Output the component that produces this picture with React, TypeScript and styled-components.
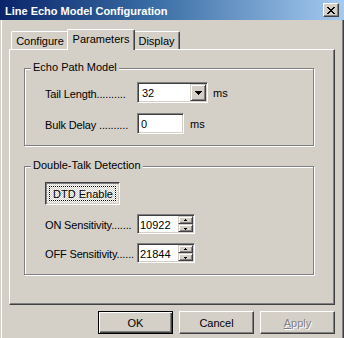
import React from 'react';
import styled, { createGlobalStyle } from 'styled-components';

const Global = createGlobalStyle`
  html, body {
    margin: 0;
    padding: 0;
    background: #d4d0c8;
  }
  * {
    box-sizing: border-box;
  }
`

const FACE = '#d4d0c8';
const SHADOW = '#808080';
const DARK = '#404040';

const Window = styled.div`
  width: 344px;
  height: 338px;
  background: ${FACE};
  font-family: "Liberation Sans", Arial, sans-serif;
  font-size: 11px;
  color: #000;
  display: flex;
  flex-direction: column;
  overflow: hidden;
`

const TitleBar = styled.div`
  height: 20px;
  flex: none;
  display: flex;
  align-items: center;
  justify-content: space-between;
  padding: 0 5px 0 5px;
  background: linear-gradient(to right, #0a246a, #3a6ea5 45%, #a6caf0);
`

const TitleText = styled.span`
  color: #fff;
  font-weight: bold;
  font-size: 11px;
  padding-top: 1px;
`

const CloseButton = styled.div`
  width: 16px;
  height: 14px;
  background: ${FACE};
  border: 1px solid;
  border-color: #fff ${DARK} ${DARK} #fff;
  box-shadow: inset -1px -1px ${SHADOW};
  display: flex;
  align-items: center;
  justify-content: center;
  padding-right: 1px;
`

const Body = styled.div`
  flex: 1;
  padding: 9px 9px 0 9px;
  box-shadow: inset 1px 0 ${FACE}, inset 2px 0 #fff, inset -1px 0 ${DARK}, inset -2px 0 ${SHADOW};
  display: flex;
  flex-direction: column;
`

const TabRow = styled.div`
  display: flex;
  align-items: flex-end;
  height: 20px;
  padding-left: 2px;
`

const Tab = styled.div<{ $active?: boolean; $w: number }>`
  position: relative;
  z-index: ${p => (p.$active ? 1 : 0)};
  width: ${p => p.$w + (p.$active ? 4 : 0)}px;
  height: ${p => (p.$active ? 21 : 18)}px;
  margin: 0 ${p => (p.$active ? -2 : 0)}px ${p => (p.$active ? -1 : 0)}px;
  background: ${FACE};
  border-top: 1px solid #fff;
  border-left: 1px solid #fff;
  border-right: 1px solid ${DARK};
  box-shadow: inset -1px 0 ${SHADOW};
  border-radius: 2px 2px 0 0;
  display: flex;
  align-items: center;
  justify-content: center;
  padding-bottom: ${p => (p.$active ? 3 : 0)}px;
`

const Panel = styled.div`
  width: 326px;
  height: 256px;
  border: 1px solid;
  border-color: #fff ${DARK} ${DARK} #fff;
  box-shadow: inset -1px -1px ${SHADOW};
  padding: 18px 0 0 14px;
  display: flex;
  flex-direction: column;
`

const Group = styled.div<{ $gap?: number }>`
  position: relative;
  width: 290px;
  margin-top: ${p => p.$gap ?? 0}px;
  border: 1px solid ${SHADOW};
  box-shadow: inset 1px 1px #fff, 1px 1px #fff;
  padding: 13px 0 11px 20px;
  display: flex;
  flex-direction: column;
`

const Caption = styled.span`
  position: absolute;
  top: -8px;
  left: 6px;
  padding: 0 2px;
  line-height: 13px;
  background: ${FACE};
`

const Row = styled.div<{ $mt?: number }>`
  display: flex;
  align-items: center;
  margin-top: ${p => p.$mt ?? 0}px;
`

const Label = styled.span`
  width: 92px;
  white-space: nowrap;
  letter-spacing: -0.15px;
  padding-top: 2px;
`

const Unit = styled.span<{ $ml: number }>`
  margin-left: ${p => p.$ml}px;
  padding-top: 1px;
`

const Sunken = styled.div<{ $w: number; $h: number }>`
  width: ${p => p.$w}px;
  height: ${p => p.$h}px;
  background: #fff;
  border: 1px solid;
  border-color: ${SHADOW} #fff #fff ${SHADOW};
  box-shadow: inset 1px 1px ${DARK}, inset -1px -1px ${FACE};
  padding: 1px;
  display: flex;
`

const FieldText = styled.span<{ $pl: number }>`
  flex: 1;
  display: flex;
  align-items: center;
  padding-left: ${p => p.$pl}px;
  padding-top: 1px;
`

const ArrowButton = styled.div<{ $h: number }>`
  width: ${p => (p.$h > 10 ? 16 : 15)}px;
  height: ${p => p.$h}px;
  background: ${FACE};
  border: 1px solid;
  border-color: ${FACE} ${DARK} ${DARK} ${FACE};
  box-shadow: inset 1px 1px #fff, inset -1px -1px ${SHADOW};
  display: flex;
  align-items: center;
  justify-content: center;
`

const SpinStack = styled.div`
  display: flex;
  flex-direction: column;
`

const PushButton = styled.div<{ $w?: number; $default?: boolean; $pressed?: boolean; $disabled?: boolean }>`
  width: ${p => p.$w ?? 75}px;
  height: 23px;
  display: flex;
  align-items: center;
  justify-content: center;
  padding: 3px;
  color: ${p => (p.$disabled ? SHADOW : '#000')};
  text-shadow: ${p => (p.$disabled ? '1px 1px #fff' : 'none')};
  border: 1px solid;
  ${p =>
    p.$pressed
      ? `
    border-color: ${DARK} #fff #fff ${DARK};
    box-shadow: inset 1px 1px ${SHADOW}, inset -1px -1px ${FACE};
    background: repeating-conic-gradient(#fff 0 25%, ${FACE} 0 50%) 0 0 / 2px 2px;
  `
      : p.$default
      ? `
    border-color: #000;
    box-shadow: inset 1px 1px #fff, inset -1px -1px ${DARK}, inset -2px -2px ${SHADOW};
    background: ${FACE};
  `
      : `
    border-color: #fff ${DARK} ${DARK} #fff;
    box-shadow: inset -1px -1px ${SHADOW};
    background: ${FACE};
  `}
`

const FocusRect = styled.span`
  flex: 1;
  align-self: stretch;
  display: flex;
  align-items: center;
  justify-content: center;
  outline: 1px dotted #000;
  outline-offset: -1px;
  padding: 1px 0 0 1px;
`

const BtnLabel = styled.span`
  padding-top: 1px;
`

const Footer = styled.div`
  display: flex;
  justify-content: flex-end;
  gap: 6px;
  margin-top: 6px;
`

function CloseGlyph() {
  return (
    <svg width="8" height="7" viewBox="0 0 8 7" shapeRendering="crispEdges">
      <path d="M0 0h2v1H0zM6 0h2v1H6zM1 1h2v1H1zM5 1h2v1H5zM2 2h4v1H2zM3 3h2v1H3zM2 4h4v1H2zM1 5h2v1H1zM5 5h2v1H5zM0 6h2v1H0zM6 6h2v1H6z" fill="#000" />
    </svg>
  )
}

function DownArrow() {
  return (
    <svg width="7" height="4" viewBox="0 0 7 4" shapeRendering="crispEdges">
      <path d="M0 0h7v1H0zM1 1h5v1H1zM2 2h3v1H2zM3 3h1v1H3z" fill="#000" />
    </svg>
  )
}

function SpinArrow({ up }: { up?: boolean }) {
  return (
    <svg width="5" height="3" viewBox="0 0 5 3" shapeRendering="crispEdges">
      <path d={up ? 'M2 0h1v1H2zM1 1h3v1H1z' : 'M1 1h3v1H1zM2 2h1v1H2z'} fill="#000" />
    </svg>
  )
}

function SpinEdit({ value }: { value: string }) {
  return (
    <Sunken $w={58} $h={20}>
      <FieldText $pl={1}>{value}</FieldText>
      <SpinStack>
        <ArrowButton $h={8}><SpinArrow up /></ArrowButton>
        <ArrowButton $h={8}><SpinArrow /></ArrowButton>
      </SpinStack>
    </Sunken>
  )
}

export default function App() {
  return (
    <>
      <Global />
      <Window>
        <TitleBar>
          <TitleText>Line Echo Model Configuration</TitleText>
          <CloseButton><CloseGlyph /></CloseButton>
        </TitleBar>
        <Body>
          <TabRow>
            <Tab $w={58}>Configure</Tab>
            <Tab $w={64} $active>Parameters</Tab>
            <Tab $w={47}>Display</Tab>
          </TabRow>
          <Panel>
            <Group>
              <Caption>Echo Path Model</Caption>
              <Row>
                <Label>Tail Length..........</Label>
                <Sunken $w={71} $h={21}>
                  <FieldText $pl={3}>32</FieldText>
                  <ArrowButton $h={17}><DownArrow /></ArrowButton>
                </Sunken>
                <Unit $ml={5}>ms</Unit>
              </Row>
              <Row $mt={10}>
                <Label>Bulk Delay ..........</Label>
                <Sunken $w={47} $h={21}>
                  <FieldText $pl={2}>0</FieldText>
                </Sunken>
                <Unit $ml={6}>ms</Unit>
              </Row>
            </Group>
            <Group $gap={20}>
              <Caption>Double-Talk Detection</Caption>
              <Row $mt={2}>
                <PushButton $pressed>
                  <FocusRect>DTD Enable</FocusRect>
                </PushButton>
              </Row>
              <Row $mt={9}>
                <Label>ON Sensitivity.......</Label>
                <SpinEdit value="10922" />
              </Row>
              <Row $mt={9}>
                <Label>OFF Sensitivity......</Label>
                <SpinEdit value="21844" />
              </Row>
            </Group>
          </Panel>
          <Footer>
            <PushButton $default><BtnLabel>OK</BtnLabel></PushButton>
            <PushButton><BtnLabel>Cancel</BtnLabel></PushButton>
            <PushButton $disabled><BtnLabel><u>A</u>pply</BtnLabel></PushButton>
          </Footer>
        </Body>
      </Window>
    </>
  )
}
